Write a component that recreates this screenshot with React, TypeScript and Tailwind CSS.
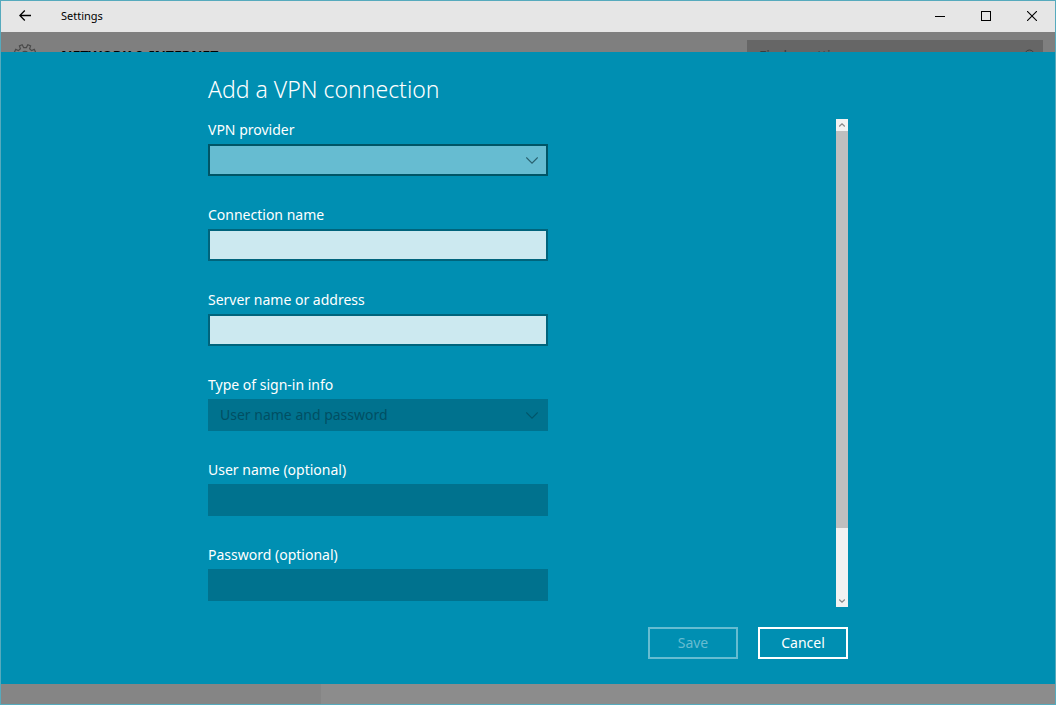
import { useState } from 'react';
import type { ReactNode } from 'react';

function ChevronDown({ className }: { className: string }) {
  return (
    <svg viewBox="0 0 12 7" className={className} fill="none" stroke="currentColor" strokeWidth="1.1" aria-hidden="true">
      <path d="M0.3 0.5 L6 6.2 L11.7 0.5" />
    </svg>
  );
}

function Field({ id, label, children }: { id: string; label: string; children: ReactNode }) {
  return (
    <div className="flex flex-col gap-[3px]">
      <label htmlFor={id} className="text-sm leading-[22px] text-white">
        {label}
      </label>
      {children}
    </div>
  );
}

function TitleBar() {
  return (
    <header className="flex h-[31px] shrink-0 items-center bg-[#e6e6e6] pb-px text-black">
      <button type="button" aria-label="Back" className="flex h-full w-12 items-center justify-center">
        <svg viewBox="0 0 12 12" className="size-3" fill="none" stroke="currentColor" strokeWidth="1.3" aria-hidden="true">
          <path d="M12 5.5 H0.8 M5.8 0.5 L0.8 5.5 L5.8 10.5" />
        </svg>
      </button>
      <span className="ml-3 flex-1 text-[11px] leading-4">Settings</span>
      <button type="button" aria-label="Minimize" className="flex h-full w-[46px] items-center justify-center">
        <svg viewBox="0 0 10 10" className="size-[10px]" shapeRendering="crispEdges" aria-hidden="true">
          <rect x="0" y="5" width="10" height="1" />
        </svg>
      </button>
      <button type="button" aria-label="Maximize" className="flex h-full w-[46px] items-center justify-center">
        <svg viewBox="0 0 10 10" className="size-[10px]" fill="none" stroke="currentColor" aria-hidden="true">
          <rect x="0.5" y="0.5" width="9" height="9" />
        </svg>
      </button>
      <button type="button" aria-label="Close" className="flex h-full w-[46px] items-center justify-center">
        <svg viewBox="0 0 10 10" className="size-[10px]" fill="none" stroke="currentColor" strokeWidth="1.1" aria-hidden="true">
          <path d="M0 0 L10 10 M10 0 L0 10" />
        </svg>
      </button>
    </header>
  );
}

function DimmedHeader() {
  return (
    <div className="flex h-5 shrink-0 items-start overflow-hidden bg-[#7f7f7f] pr-3">
      <svg viewBox="0 0 24 24" className="mt-3 ml-3 size-6 shrink-0 text-[#4a4a4a]" fill="none" stroke="currentColor" strokeWidth="1.2" aria-hidden="true">
        <path d="M10.6 3.6 L9.2 0.8 L6.4 1.9 L7.4 4.8 L5.4 6.6 L2.7 5.4 L1.4 8.2 L4 9.4 V12.6 L1.4 13.8 L2.7 16.6 L5.4 15.4 L7.6 17.4 L6.4 20.1 L9.2 21.2 L10.3 18.6 H13.7 L14.8 21.2 L17.6 20.1 L16.4 17.4 L18.6 15.4 L21.3 16.6 L22.6 13.8 L20 12.6 V9.4 L22.6 8.2 L21.3 5.4 L18.6 6.6 L16.6 4.8 L17.6 1.9 L14.8 0.8 L13.4 3.6 Z" />
        <circle cx="12" cy="11" r="3.6" />
      </svg>
      <p className="mt-[14px] ml-6 flex-1 text-sm leading-5 font-bold text-black">NETWORK &amp; INTERNET</p>
      <div className="mt-2 flex h-8 w-[296px] items-center justify-between bg-[#666666] pr-2 pl-3 text-sm text-[#3c3c3c]">
        <span>Find a setting</span>
        <svg viewBox="0 0 14 14" className="size-[14px]" fill="none" stroke="currentColor" aria-hidden="true">
          <circle cx="8.5" cy="5.5" r="4.5" />
          <path d="M5.2 8.8 L0.5 13.5" />
        </svg>
      </div>
    </div>
  );
}

function ScrollBar() {
  return (
    <div className="flex w-3 shrink-0 flex-col bg-[#f2f2f2] text-[#8a8a8a]">
      <button type="button" aria-label="Scroll up" className="flex h-3 items-center justify-center">
        <svg viewBox="0 0 6 4" className="h-1 w-[6px]" fill="none" stroke="currentColor" strokeWidth="1.2" aria-hidden="true">
          <path d="M0.2 3.5 L3 0.8 L5.8 3.5" />
        </svg>
      </button>
      <div className="flex-[397] bg-[#bfbfbf]" />
      <div className="flex-[67]" />
      <button type="button" aria-label="Scroll down" className="flex h-3 items-center justify-center">
        <svg viewBox="0 0 6 4" className="h-1 w-[6px]" fill="none" stroke="currentColor" strokeWidth="1.2" aria-hidden="true">
          <path d="M0.2 0.5 L3 3.2 L5.8 0.5" />
        </svg>
      </button>
    </div>
  );
}

export default function App() {
  const [name, setName] = useState('');
  const [server, setServer] = useState('');

  return (
    <div className="flex min-h-screen flex-col border border-[#56aabd] font-['Noto_Sans','Open_Sans',sans-serif]">
      <TitleBar />
      <DimmedHeader />
      <main className="flex flex-1 flex-col bg-[#008fb2] pt-[21px] pb-[25px]">
        <form className="mx-auto flex w-full max-w-[640px] flex-1 flex-col" onSubmit={(e) => e.preventDefault()}>
          <h1 className="text-[23px] leading-8 font-light text-white">Add a VPN connection</h1>
          <div className="mt-[14px] flex flex-1 justify-between">
            <div className="flex w-[340px] flex-col gap-7">
              <Field id="provider" label="VPN provider">
                <div className="relative">
                  <select id="provider" defaultValue="" className="block h-8 w-full appearance-none border-2 border-[#005566] bg-[#66bcd1] px-[10px] text-sm text-black">
                    <option value=""></option>
                  </select>
                  <ChevronDown className="pointer-events-none absolute top-[13px] right-[10px] h-[7px] w-3 text-[#29606e]" />
                </div>
              </Field>
              <Field id="connection" label="Connection name">
                <input id="connection" value={name} onChange={(e) => setName(e.target.value)} className="h-8 border-2 border-[#00647c] bg-[#cce9f0] px-[10px] text-sm text-black" />
              </Field>
              <Field id="server" label="Server name or address">
                <input id="server" value={server} onChange={(e) => setServer(e.target.value)} className="h-8 border-2 border-[#00647c] bg-[#cce9f0] px-[10px] text-sm text-black" />
              </Field>
              <Field id="signin" label="Type of sign-in info">
                <div className="relative">
                  <select id="signin" disabled className="block h-8 w-full appearance-none bg-[#00728e] px-3 text-sm text-[#004f63] opacity-100">
                    <option>User name and password</option>
                  </select>
                  <ChevronDown className="pointer-events-none absolute top-[13px] right-[10px] h-[7px] w-3 text-[#00566b]" />
                </div>
              </Field>
              <Field id="username" label="User name (optional)">
                <input id="username" disabled className="h-8 bg-[#00728e] px-3 text-sm" />
              </Field>
              <Field id="password" label="Password (optional)">
                <input id="password" type="password" disabled className="h-8 bg-[#00728e] px-3 text-sm" />
              </Field>
            </div>
            <ScrollBar />
          </div>
          <div className="mt-5 flex justify-end gap-5">
            <button type="submit" disabled className="h-8 w-[90px] border-2 border-[#66bcd1] text-sm leading-5 text-[#66bcd1]">
              Save
            </button>
            <button type="button" className="h-8 w-[90px] border-2 border-white text-sm leading-5 text-white">
              Cancel
            </button>
          </div>
        </form>
      </main>
      <div className="flex h-5 shrink-0 bg-[#8c8c8c]">
        <div className="w-80 bg-[#858585]" />
      </div>
    </div>
  );
}
